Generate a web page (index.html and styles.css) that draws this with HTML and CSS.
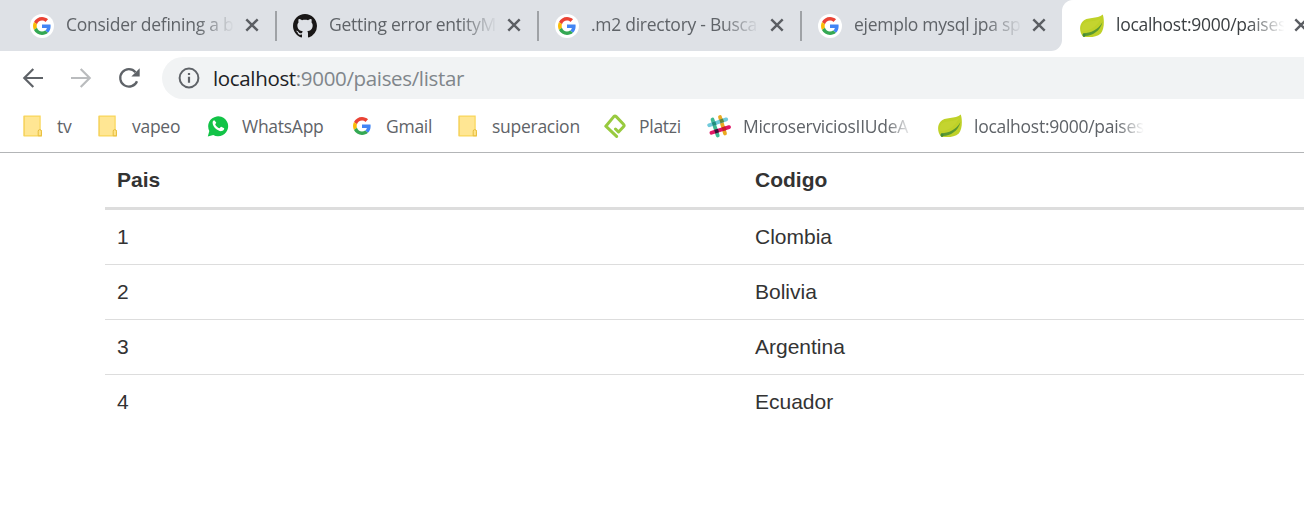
FILE: index.html
```html
<!DOCTYPE html>
<html lang="es">
<head>
<meta charset="utf-8">
<title>localhost:9000/paises/listar</title>
<link rel="stylesheet" href="styles.css">
</head>
<body>
<svg class="defs" width="0" height="0" aria-hidden="true">
  <symbol id="google" viewBox="0 0 48 48">
    <path fill="#ea4335" d="M24 9.5c3.54 0 6.71 1.22 9.21 3.6l6.85-6.85C35.9 2.38 30.47 0 24 0 14.62 0 6.51 5.38 2.56 13.22l7.98 6.19C12.43 13.72 17.74 9.5 24 9.5z"/>
    <path fill="#4285f4" d="M46.98 24.55c0-1.57-.15-3.09-.38-4.55H24v9.02h12.94c-.58 2.96-2.26 5.48-4.78 7.18l7.73 6c4.51-4.18 7.09-10.36 7.09-17.65z"/>
    <path fill="#fbbc05" d="M10.53 28.59c-.48-1.45-.76-2.99-.76-4.59s.27-3.14.76-4.59l-7.98-6.19C.92 16.46 0 20.12 0 24c0 3.88.92 7.54 2.56 10.78l7.97-6.19z"/>
    <path fill="#34a853" d="M24 48c6.48 0 11.93-2.13 15.89-5.81l-7.73-6c-2.15 1.45-4.92 2.3-8.16 2.3-6.26 0-11.57-4.22-13.47-9.91l-7.98 6.19C6.51 42.62 14.62 48 24 48z"/>
  </symbol>
  <symbol id="google-disc" viewBox="0 0 24 24">
    <circle cx="12" cy="12" r="12" fill="#fff"/>
    <use href="#google" x="3" y="3" width="18" height="18"/>
  </symbol>
  <symbol id="github" viewBox="0 0 16 16">
    <path fill="#191717" d="M8 0C3.58 0 0 3.58 0 8c0 3.54 2.29 6.53 5.47 7.59.4.07.55-.17.55-.38 0-.19-.01-.82-.01-1.49-2.01.37-2.53-.49-2.69-.94-.09-.23-.48-.94-.82-1.13-.28-.15-.68-.52-.01-.53.63-.01 1.08.58 1.23.82.72 1.21 1.87.87 2.33.66.07-.52.28-.87.51-1.07-1.78-.2-3.64-.89-3.64-3.95 0-.87.31-1.59.82-2.15-.08-.2-.36-1.02.08-2.12 0 0 .67-.21 2.2.82.64-.18 1.32-.27 2-.27s1.36.09 2 .27c1.53-1.04 2.2-.82 2.2-.82.44 1.1.16 1.92.08 2.12.51.56.82 1.27.82 2.15 0 3.07-1.87 3.75-3.65 3.95.29.25.54.73.54 1.48 0 1.07-.01 1.93-.01 2.2 0 .21.15.46.55.38A8.01 8.01 0 0 0 16 8c0-4.42-3.58-8-8-8z"/>
  </symbol>
  <symbol id="leaf" viewBox="0 0 24 24">
    <path fill="#bfd128" d="M22.800 .6C24.400 5.500 24.500 15 20.800 19.500c-4.500 4.300-12.300 3.700-17.500 3.200C-.5 19.500-1 11.800 2.200 8 6.400 2.200 17.500 5.800 22.800.6z"/>
    <path fill="#d4df45" d="M21.300 3.500C17.500 8.300 7.500 6.200 3.700 9.500 1.400 11.600 1.200 15 1.700 17.500 10 17 17.500 12.500 21.300 3.500z" opacity=".25"/>
    <path fill="#5a9832" d="M3.200 19.200c7.800-.3 14.500-3.200 19.200-11C20.500 17 12 21.800 5.300 21.900c-.3 1.200-1.800 1.400-2.400.4z"/>
    <circle cx="4" cy="21" r="1.500" fill="#438a3a"/>
  </symbol>
  <symbol id="close" viewBox="0 0 14 14">
    <path d="M1.300 1.300l11.400 11.400M12.700 1.300L1.300 12.700" stroke="#5b5e63" stroke-width="2.400" fill="none"/>
  </symbol>
  <symbol id="folder" viewBox="0 0 24 24">
    <path d="M3.200 2.100h15.900v14.800h1.300v5H3.200z" fill="#ffe693" stroke="#f9d65b" stroke-width="1.200"/>
    <path d="M3 2v20" stroke="#f3d05c" stroke-width="1"/>
    <path d="M17.200 21.800v-4.600q0-1.600 1.600-1.600t1.600 1.600v4.600z" fill="#ffe48b" stroke="#e6bd3d" stroke-width="1"/>
  </symbol>
</svg>

<header class="browser">
  <nav class="tabs">
    <div class="tab"><svg class="favicon"><use href="#google-disc"/></svg><span class="tab-title">Consider defining a b</span><svg class="close"><use href="#close"/></svg></div>
    <div class="tab"><svg class="favicon"><use href="#github"/></svg><span class="tab-title">Getting error entityM</span><svg class="close"><use href="#close"/></svg></div>
    <div class="tab"><svg class="favicon"><use href="#google-disc"/></svg><span class="tab-title">.m2 directory - Busca</span><svg class="close"><use href="#close"/></svg></div>
    <div class="tab last"><svg class="favicon"><use href="#google-disc"/></svg><span class="tab-title">ejemplo mysql jpa sp</span><svg class="close"><use href="#close"/></svg></div>
    <div class="tab active"><svg class="favicon"><use href="#leaf"/></svg><span class="tab-title">localhost:9000/paises</span><svg class="close"><use href="#close"/></svg></div>
  </nav>

  <div class="toolbar">
    <svg class="nav-icon" viewBox="0 0 24 24" fill="none" stroke="#5f6368" stroke-width="2.200"><path d="M22 12H3.500M12.300 3L3.300 12l9 9"/></svg>
    <svg class="nav-icon" viewBox="0 0 24 24" fill="none" stroke="#babcbe" stroke-width="2.200"><path d="M2 12h18.500M11.700 3l9 9-9 9"/></svg>
    <svg class="nav-icon" viewBox="0 0 24 24"><path d="M20 15.200A8.700 8.700 0 1 1 18.500 6.200" fill="none" stroke="#5f6368" stroke-width="2.300"/><path d="M22.700 2.200v8.300h-8.300z" fill="#5f6368"/></svg>
    <div class="omnibox">
      <svg class="info" viewBox="0 0 22 22"><circle cx="11" cy="11" r="9.400" fill="none" stroke="#5f6368" stroke-width="2"/><path d="M9.900 9.800h2.200v6H9.900zM9.900 5.900h2.200v2.200H9.900z" fill="#5f6368"/></svg>
      <span class="url"><b>localhost</b>:9000/paises/listar</span>
    </div>
  </div>

  <nav class="bookmarks">
    <a class="bookmark"><svg class="mark"><use href="#folder"/></svg><span>tv</span></a>
    <a class="bookmark"><svg class="mark"><use href="#folder"/></svg><span>vapeo</span></a>
    <a class="bookmark"><svg class="mark" viewBox="0 0 24 24"><path d="M1.800 22.500l1.500-5.600A10 10 0 1 1 7.300 21z" fill="#12c347"/><path d="M8.300 6.300c-.5 0-1.700.7-1.700 2.500 0 4.300 5.400 8.700 8.900 8.300 1.500-.2 2.800-1.200 2.700-2.800l-3-1.500c-.6-.2-1.200 1.500-1.800 1.400-1.700-.6-3.400-2.200-4.200-3.800 0-.6 1.200-1.300 1-1.900z" fill="#fff"/></svg><span>WhatsApp</span></a>
    <a class="bookmark"><svg class="mark" viewBox="0 0 24 24"><use href="#google" x="3" y="3" width="18" height="18"/></svg><span>Gmail</span></a>
    <a class="bookmark"><svg class="mark"><use href="#folder"/></svg><span>superacion</span></a>
    <a class="bookmark"><svg class="mark" viewBox="0 0 24 24"><path d="M13.600 22.400L2.800 12.200 10.800 2.600q1.200-1.200 2.400 0l7.300 7.600q1.200 1.300 0 2.500L15.500 18l-3-3" fill="none" stroke="#98ca3f" stroke-width="3" stroke-linecap="round" stroke-linejoin="round"/></svg><span>Platzi</span></a>
    <a class="bookmark"><svg class="mark" viewBox="0 0 24 24" fill="none" stroke-width="3.800" stroke-linecap="round"><path d="M13 3l5 16.500" stroke="#eba922"/><path d="M5.500 5.500l5.200 16" stroke="#3eb991"/><path d="M2.200 11.200l17-5.800" stroke="#70cadb"/><path d="M4.500 18.800l17.500-5.700" stroke="#e01765"/><g stroke-linecap="butt"><path d="M5.300 10.200l3.600-1.200" stroke="#208e7b"/><path d="M12.900 7.500l3.600-1.200" stroke="#61863b"/><path d="M7.800 17.700l3.600-1.200" stroke="#361238"/><path d="M15.300 15.300l3.600-1.200" stroke="#cb2027"/></g></svg><span class="clipped">MicroserviciosIIUdeA</span></a>
    <a class="bookmark"><svg class="mark"><use href="#leaf"/></svg><span class="clipped">localhost:9000/paises</span></a>
  </nav>
</header>

<main class="content">
  <table class="countries">
    <thead><tr><th>Pais</th><th>Codigo</th></tr></thead>
    <tbody>
      <tr><td>1</td><td>Clombia</td></tr>
      <tr><td>2</td><td>Bolivia</td></tr>
      <tr><td>3</td><td>Argentina</td></tr>
      <tr><td>4</td><td>Ecuador</td></tr>
    </tbody>
  </table>
</main>
</body>
</html>
```
FILE: styles.css
```css
* { box-sizing: border-box; }
body {
  margin: 0;
  overflow: hidden;
  background: #fff;
  color: #333;
  font-family: "Liberation Sans", Arial, sans-serif;
}
.defs { display: block; height: 0; }
.browser {
  height: 153px;
  border-bottom: 1px solid #b3b5b7;
  font-family: "Open Sans", "Noto Sans", sans-serif;
  font-size: 17.5px;
  letter-spacing: -0.27px;
  color: #5f6368;
  overflow: hidden;
}
.tabs {
  display: grid;
  grid-template-columns: 277px 262px 263px 260px 242px;
  height: 51px;
  background: #fff;
}
.tab {
  display: flex;
  align-items: center;
  min-width: 0;
  background: linear-gradient(#9fa2a6, #9fa2a6) right 11px / 2px 30px no-repeat #dee1e6;
  padding-right: 18px;
}
.tab:first-child { padding-left: 14px; }
.tab.last { background: #dee1e6; border-bottom-right-radius: 11px; padding-right: 16px; }
.tab.active {
  background: radial-gradient(circle at 11px 11px, #fff 10.5px, #dee1e6 11.5px) 0 0 / 11px 11px no-repeat #fff;
  color: #3c4043;
  padding-right: 0;
  overflow: hidden;
}
.favicon { flex: none; width: 24px; height: 24px; margin-left: 16px; }
.tab.active .favicon { margin-left: 18px; }
.tab-title {
  flex: none;
  width: 172px;
  margin-left: 12px;
  padding-bottom: 3px;
  white-space: nowrap;
  -webkit-mask-image: linear-gradient(90deg, #000 76%, transparent 98%);
  mask-image: linear-gradient(90deg, #000 76%, transparent 98%);
}
.close { flex: none; width: 14px; height: 14px; margin-left: auto; margin-bottom: 1px; }
.tab.active .close { margin-left: 6px; }
.toolbar {
  display: flex;
  align-items: center;
  height: 54px;
  padding-left: 21px;
}
.nav-icon { flex: none; width: 24px; height: 24px; margin-right: 24px; }
.nav-icon:nth-child(3) { margin-right: 21px; }
.omnibox {
  flex: 1;
  display: flex;
  align-items: center;
  height: 42px;
  background: #f1f3f4;
  border-radius: 21px 0 0 21px;
  padding-left: 16px;
}
.info { width: 22px; height: 22px; margin-right: 13px; }
.url { font-size: 20.5px; letter-spacing: -0.34px; color: #80868b; white-space: nowrap; }
.url b { color: #202124; font-weight: 400; }
.bookmarks {
  display: grid;
  grid-template-columns: 75px 110px 144px 106px 147px 104px 231px 230px;
  padding-left: 21px;
  height: 42px;
}
.bookmark { display: flex; align-items: center; white-space: nowrap; min-width: 0; }
.bookmark span { padding-bottom: 1px; }
.mark { flex: none; width: 24px; height: 24px; margin-right: 12px; }
.clipped {
  width: 170px;
  -webkit-mask-image: linear-gradient(90deg, #000 84%, transparent 100%);
  mask-image: linear-gradient(90deg, #000 84%, transparent 100%);
}
.content { width: 1304px; padding-left: 105px; }
.countries {
  width: 100%;
  table-layout: fixed;
  border-spacing: 0;
  font-size: 21px;
  line-height: 30px;
}
.countries th, .countries td { padding: 12px; text-align: left; }
.countries th:first-child { width: 638px; }
.countries th { border-bottom: 3px solid #ddd; }
.countries td { border-top: 1px solid #ddd; }
.countries tbody tr:first-child td { border-top: 0; }
```
